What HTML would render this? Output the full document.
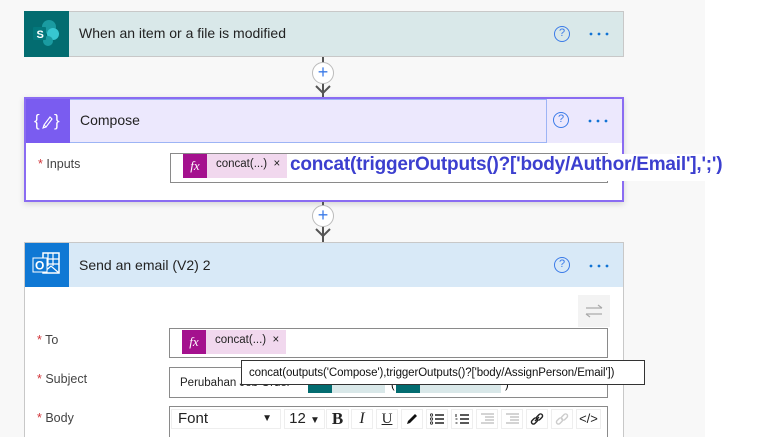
<!DOCTYPE html>
<html><head><meta charset="utf-8"><style>
*{box-sizing:border-box;margin:0;padding:0}
body{width:780px;height:448px;overflow:hidden;background:#fff;font-family:"Segoe UI","Liberation Sans",sans-serif;position:relative}
.a{position:absolute}
.t{font-size:14px;color:#222}
.lbl{font-size:12.5px;color:#444}
.lbl b{color:#d13438;font-weight:normal}
.q{width:16px;height:16px;border:1.5px solid #3b7be8;border-radius:50%;font-size:11px;color:#3b7be8;text-align:center;line-height:13px}
.tb{position:absolute;top:409px;height:20px;background:#fff;border:1px solid #eee;font-size:14px;text-align:center;line-height:18px;color:#222}
</style></head><body>
<div class="a" style="left:0;top:0;width:705px;height:437px;background:#f8f8f8"></div>

<!-- card 1 -->
<div class="a" style="left:24px;top:11px;width:600px;height:46px;background:#d9e8e9;border:1px solid #c8c8c8"></div>
<div class="a" style="left:24px;top:11px;width:45px;height:46px;background:#036c70"></div>
<svg class="a" style="left:30px;top:18px" width="34" height="32"><circle cx="19" cy="9" r="7" fill="#1a9ba1"/><circle cx="23" cy="16" r="6" fill="#37c6d0"/><circle cx="18" cy="23" r="5" fill="#1a9ba1"/><rect x="3" y="9" width="13" height="13" rx="1" fill="#03787c"/><text x="6.5" y="20" font-size="11" font-weight="bold" fill="#fff" font-family="Liberation Sans">S</text></svg>
<div class="a t" style="left:79px;top:25px">When an item or a file is modified</div>
<div class="a q" style="left:554px;top:26px">?</div>
<svg class="a" style="left:589px;top:32px" width="22" height="4"><circle cx="2" cy="2" r="1.4" fill="#1173d4"/><circle cx="10" cy="2" r="1.4" fill="#1173d4"/><circle cx="18" cy="2" r="1.4" fill="#1173d4"/></svg>

<!-- connector 1 -->
<div class="a" style="left:322px;top:57px;width:2px;height:40px;background:#555"></div>
<div class="a" style="left:312px;top:62px;width:22px;height:22px;border-radius:50%;background:#fff;border:1.5px solid #bbb;color:#3b7be8;font-size:18px;line-height:18px;text-align:center">+</div>
<svg class="a" style="left:314px;top:84px" width="18" height="12"><path d="M2 2 L9 9 L16 2" stroke="#555" stroke-width="2" fill="none"/></svg>

<!-- card 2 -->
<div class="a" style="left:24px;top:97px;width:600px;height:105px;background:#fff;border:2px solid #8a6cf2;box-shadow:0 2px 6px rgba(0,0,0,.15)"></div>
<div class="a" style="left:26px;top:99px;width:596px;height:44px;background:#ece8fd"></div>
<div class="a" style="left:69px;top:99px;width:478px;height:44px;border:1px solid #9db4f5"></div>
<div class="a" style="left:26px;top:99px;width:44px;height:44px;background:#7a5cf0"></div>
<svg class="a" style="left:34px;top:110px" width="28" height="22"><text x="0" y="16" font-size="17" fill="#fff" font-family="Liberation Sans">{</text><text x="20" y="16" font-size="17" fill="#fff" font-family="Liberation Sans">}</text><path d="M10 15 L16 7 L18 9 L12 17 Z M10 15 L9 18 L12 17" stroke="#fff" stroke-width="1.1" fill="none"/></svg>
<div class="a t" style="left:80px;top:112px">Compose</div>
<div class="a q" style="left:553px;top:112px">?</div>
<svg class="a" style="left:588px;top:119px" width="22" height="4"><circle cx="2" cy="2" r="1.4" fill="#1173d4"/><circle cx="10" cy="2" r="1.4" fill="#1173d4"/><circle cx="18" cy="2" r="1.4" fill="#1173d4"/></svg>
<div class="a lbl" style="left:38px;top:157px"><b>*</b> Inputs</div>
<div class="a" style="left:170px;top:153px;width:438px;height:30px;border:1px solid #8a8a8a;background:#fff"></div>
<div class="a" style="left:183px;top:154px;width:104px;height:24px;background:#f1d8ee"></div>
<div class="a" style="left:183px;top:154px;width:24px;height:24px;background:#a4118e;color:#fff;font-family:'Liberation Serif';font-style:italic;font-size:13px;text-align:center;line-height:23px">fx</div>
<div class="a" style="left:216px;top:158px;font-size:11.5px;color:#222">concat(...) &nbsp;×</div>
<div class="a" style="left:288px;top:154px;width:434px;height:27px;background:#fff"></div>
<div class="a" style="left:290px;top:154px;font-size:19px;font-weight:bold;color:#3c3fcf;white-space:nowrap;letter-spacing:-0.2px">concat(triggerOutputs()?['body/Author/Email'],';')</div>

<!-- connector 2 -->
<div class="a" style="left:322px;top:202px;width:2px;height:40px;background:#555"></div>
<div class="a" style="left:312px;top:205px;width:22px;height:22px;border-radius:50%;background:#fff;border:1.5px solid #bbb;color:#3b7be8;font-size:18px;line-height:18px;text-align:center">+</div>
<svg class="a" style="left:314px;top:227px" width="18" height="12"><path d="M2 2 L9 9 L16 2" stroke="#555" stroke-width="2" fill="none"/></svg>

<!-- card 3 -->
<div class="a" style="left:24px;top:242px;width:600px;height:200px;background:#fff;border:1px solid #c8c8c8"></div>
<div class="a" style="left:25px;top:243px;width:598px;height:44px;background:#d8e9f7"></div>
<div class="a" style="left:25px;top:243px;width:44px;height:44px;background:#0f78d4"></div>
<svg class="a" style="left:31px;top:251px" width="32" height="28"><rect x="12" y="2" width="16" height="20" fill="none" stroke="#fff" stroke-width="1.5"/><path d="M17 2v13M22 2v13M12 8h16M12 13h16" stroke="#fff" stroke-width="1.2"/><path d="M12 22 L20 15 L28 22" stroke="#fff" stroke-width="1.2" fill="none"/><rect x="2" y="7" width="14" height="14" fill="#0f78d4" stroke="#fff" stroke-width="1"/><text x="4" y="18.5" font-size="12" font-weight="bold" fill="#fff" font-family="Liberation Sans">O</text></svg>
<div class="a t" style="left:79px;top:257px">Send an email (V2) 2</div>
<div class="a q" style="left:554px;top:257px">?</div>
<svg class="a" style="left:589px;top:264px" width="22" height="4"><circle cx="2" cy="2" r="1.4" fill="#1173d4"/><circle cx="10" cy="2" r="1.4" fill="#1173d4"/><circle cx="18" cy="2" r="1.4" fill="#1173d4"/></svg>
<div class="a" style="left:578px;top:295px;width:32px;height:32px;background:#f3f3f3"></div>
<svg class="a" style="left:584px;top:304px" width="20" height="14"><path d="M2 4h16M14 1l4 3M2 10h16M6 13l-4-3" stroke="#aaa" stroke-width="1.2" fill="none"/></svg>
<div class="a lbl" style="left:37px;top:333px"><b>*</b> To</div>
<div class="a" style="left:169px;top:328px;width:439px;height:30px;border:1px solid #8a8a8a;background:#fff"></div>
<div class="a" style="left:182px;top:330px;width:104px;height:24px;background:#f1d8ee"></div>
<div class="a" style="left:182px;top:330px;width:24px;height:24px;background:#a4118e;color:#fff;font-family:'Liberation Serif';font-style:italic;font-size:13px;text-align:center;line-height:23px">fx</div>
<div class="a" style="left:215px;top:334px;font-size:11.5px;color:#222">concat(...) &nbsp;×</div>
<div class="a lbl" style="left:37px;top:372px"><b>*</b> Subject</div>
<div class="a" style="left:169px;top:367px;width:439px;height:31px;border:1px solid #8a8a8a;background:#fff"></div>
<div class="a" style="left:180px;top:377px;font-size:11.5px;color:#222">Perubahan Job Order -</div>
<div class="a" style="left:308px;top:380px;width:24px;height:13px;background:#036c70"></div>
<div class="a" style="left:332px;top:380px;width:53px;height:13px;background:#d9e8e9"></div>
<div class="a" style="left:391px;top:379px;font-size:11px">(</div>
<div class="a" style="left:396px;top:380px;width:24px;height:13px;background:#036c70"></div>
<div class="a" style="left:420px;top:380px;width:81px;height:13px;background:#d9e8e9"></div>
<div class="a" style="left:505px;top:379px;font-size:11px">)</div>
<div class="a" style="left:241px;top:360px;width:404px;height:25px;background:#fff;border:1px solid #333;font-size:11.5px;color:#111;line-height:24px;padding-left:7px;white-space:nowrap;letter-spacing:-0.1px">concat(outputs('Compose'),triggerOutputs()?['body/AssignPerson/Email'])</div>
<div class="a lbl" style="left:37px;top:411px"><b>*</b> Body</div>
<div class="a" style="left:169px;top:406px;width:439px;height:40px;border:1px solid #8a8a8a;background:#fff"></div>
<div class="tb" style="left:171px;width:110px;text-align:left;padding-left:6px;font-size:15px">Font<span style="position:absolute;right:8px;font-size:10px">▼</span></div>
<div class="tb" style="left:284px;width:41px;font-size:15px">12 <span style="font-size:10px">▼</span></div>
<div class="tb" style="left:326px;width:23px;font-family:'Liberation Serif';font-weight:bold;font-size:17px">B</div>
<div class="tb" style="left:351px;width:22px;font-family:'Liberation Serif';font-style:italic;font-size:16px">I</div>
<div class="tb" style="left:376px;width:22px;font-family:'Liberation Serif';text-decoration:underline;font-size:15px">U</div>
<div class="tb" style="left:401px;width:22px"><svg width="14" height="14" style="margin-top:2px"><path d="M2 12 L3 9 L10 2 L12 4 L5 11 Z" fill="#111"/></svg></div>
<div class="tb" style="left:426px;width:22px"><svg width="14" height="12" style="margin-top:3px"><path d="M5 2h9M5 6h9M5 10h9" stroke="#222" stroke-width="1.4"/><circle cx="1.5" cy="2" r="1.2" fill="none" stroke="#222" stroke-width=".8"/><circle cx="1.5" cy="6" r="1.2" fill="none" stroke="#222" stroke-width=".8"/><circle cx="1.5" cy="10" r="1.2" fill="none" stroke="#222" stroke-width=".8"/></svg></div>
<div class="tb" style="left:451px;width:22px"><svg width="14" height="12" style="margin-top:3px"><path d="M5 2h9M5 6h9M5 10h9" stroke="#222" stroke-width="1.4"/><path d="M1 1v3M0.5 6h2M0.5 10h2" stroke="#222" stroke-width="1"/></svg></div>
<div class="tb" style="left:476px;width:22px"><svg width="14" height="12" style="margin-top:3px"><path d="M1 1h13M5 4h9M5 7h9M1 10h13" stroke="#bbb" stroke-width="1.2"/></svg></div>
<div class="tb" style="left:501px;width:22px"><svg width="14" height="12" style="margin-top:3px"><path d="M1 1h13M5 4h9M5 7h9M1 10h13" stroke="#bbb" stroke-width="1.2"/></svg></div>
<div class="tb" style="left:526px;width:22px"><svg width="14" height="14" style="margin-top:2px"><path d="M5 9 L9 5" stroke="#222" stroke-width="1.4"/><rect x="1" y="7" width="7" height="4" rx="2" transform="rotate(-45 4.5 9)" fill="none" stroke="#222" stroke-width="1.4"/><rect x="6" y="3" width="7" height="4" rx="2" transform="rotate(-45 9.5 5)" fill="none" stroke="#222" stroke-width="1.4"/></svg></div>
<div class="tb" style="left:551px;width:22px"><svg width="14" height="14" style="margin-top:2px"><rect x="1" y="7" width="7" height="4" rx="2" transform="rotate(-45 4.5 9)" fill="none" stroke="#ccc" stroke-width="1.4"/><rect x="6" y="3" width="7" height="4" rx="2" transform="rotate(-45 9.5 5)" fill="none" stroke="#ccc" stroke-width="1.4"/></svg></div>
<div class="tb" style="left:576px;width:25px;font-size:13px">&lt;/&gt;</div>
<div class="a" style="left:0;top:437px;width:780px;height:11px;background:#fff"></div>
</body></html>
